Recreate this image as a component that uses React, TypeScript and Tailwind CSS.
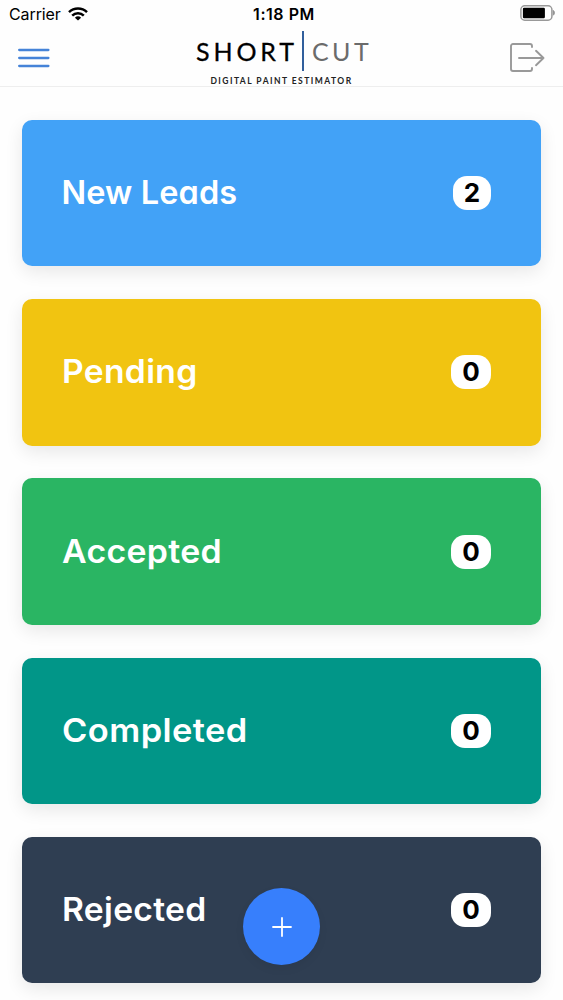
import React from "react";

type Lead = {
  label: string;
  count: number;
  color: string;
  stretch: string;
  badge: string;
};

const leads: Lead[] = [
  { label: "New Leads", count: 2, color: "bg-[#42a2f7]", stretch: "tracking-[0.1px]", badge: "w-[38px]" },
  { label: "Pending", count: 0, color: "bg-[#f1c411]", stretch: "tracking-[0.3px] scale-x-[1.035]", badge: "w-10" },
  { label: "Accepted", count: 0, color: "bg-[#2ab563]", stretch: "tracking-[0.3px] scale-x-[1.042]", badge: "w-10" },
  { label: "Completed", count: 0, color: "bg-[#019688]", stretch: "tracking-[0.4px] scale-x-[1.06]", badge: "w-10" },
  { label: "Rejected", count: 0, color: "bg-[#2f3e52]", stretch: "tracking-[0.3px] scale-x-[1.035]", badge: "w-10" },
];

function StatusBar() {
  return (
    <div className="grid h-7 grid-cols-3 items-center pl-[9px] pr-[8px] text-[16px] leading-7 text-black">
      <div className="flex items-center gap-[7px]">
        <span className="-mt-px tracking-[-0.1px]">Carrier</span>
        <svg className="-mt-px" width="20" height="14" viewBox="0 0 20 14" fill="none" stroke="#000" strokeWidth="2.5">
          <path d="M1 5.2a13 13 0 0 1 18 0" />
          <path d="M4.2 8.6a8.3 8.3 0 0 1 11.6 0" />
          <path d="M10 13.6 6.9 10.7a4.5 4.5 0 0 1 6.2 0Z" fill="#000" stroke="none" />
        </svg>
      </div>
      <span className="-mt-px pl-1 text-center font-semibold tracking-[0.55px]">1:18 PM</span>
      <svg className="-mt-0.5 justify-self-end" width="35" height="16" viewBox="0 0 35 16">
        <rect x="0.9" y="0.8" width="31" height="14.4" rx="3.8" fill="none" stroke="#999" strokeWidth="1.5" />
        <rect x="2.9" y="2.8" width="22" height="10.4" rx="1.2" fill="#000" />
        <path d="M33.2 5.3a3 3 0 0 1 0 5Z" fill="#888" stroke="#888" strokeWidth="0.6" />
      </svg>
    </div>
  );
}

function Logo() {
  return (
    <div className="flex flex-col items-center font-['Lato',sans-serif]">
      <div className="flex h-[42px] items-center text-[25px] leading-[42px]">
        <span className="w-[109px] pl-[3px] tracking-[3.9px] text-black [-webkit-text-stroke:0.3px_#000]">SHORT</span>
        <span className="h-10 w-0.5 bg-[#315f9c]" />
        <span className="w-[66px] pl-[8px] tracking-[3.4px] text-[#6b6b6b]">CUT</span>
      </div>
      <span className="pt-[3px] text-[8.5px] font-bold leading-3 tracking-[1.45px] text-[#222]">
        DIGITAL PAINT ESTIMATOR
      </span>
    </div>
  );
}

function Header() {
  return (
    <header className="flex h-[59px] items-start justify-between border-b border-[#eeeeee] pl-[18px] pr-[18px]">
      <button aria-label="Menu" className="mt-[20px] w-[35px]">
        <svg width="32" height="20" viewBox="0 0 32 20" stroke="#4583d8" strokeWidth="2.3" strokeLinecap="round">
          <path d="M1.2 2h29.2M1.2 10h29.2M1.2 18h29.2" />
        </svg>
      </button>
      <div className="mt-0.5">
        <Logo />
      </div>
      <button aria-label="Log out" className="mt-[14px]">
        <svg width="35" height="31" viewBox="0 0 35 31" fill="none" stroke="#999" strokeWidth="1.9" strokeLinecap="round" strokeLinejoin="round">
          <path d="M22 5V4a2 2 0 0 0-2-2H3a2 2 0 0 0-2 2v23a2 2 0 0 0 2 2h17a2 2 0 0 0 2-2v-1" />
          <path d="M9 16h24.5M26 8.8l7.5 7.2L26 23.2" />
        </svg>
      </button>
    </header>
  );
}

function LeadCard({ lead }: { lead: Lead }) {
  return (
    <div className={`flex h-[146.5px] shrink-0 items-center justify-between rounded-[10px] pl-[39.5px] pr-[50px] shadow-[0_6px_18px_rgba(0,0,0,0.09)] ${lead.color}`}>
      <span className={`origin-left text-[32.5px] font-semibold leading-10 text-white [font-feature-settings:'cv11'] ${lead.stretch}`}>
        {lead.label}
      </span>
      <span className={`flex h-[34px] items-center justify-center rounded-[14px] bg-white text-[26px] font-bold leading-none text-black ${lead.badge}`}>
        {lead.count}
      </span>
    </div>
  );
}

export default function App() {
  return (
    <div className="relative flex h-[1000px] w-full flex-col overflow-hidden bg-[#fefefe] font-['Inter',sans-serif]">
      <StatusBar />
      <Header />
      <main className="flex flex-col gap-[32.75px] px-[22px] pt-[32.75px]">
        {leads.map((lead) => (
          <LeadCard key={lead.label} lead={lead} />
        ))}
      </main>
      <button aria-label="Add lead" className="absolute left-[243px] top-[888px] flex size-[77px] items-center justify-center rounded-full bg-[#377ffc] shadow-[0_4px_10px_rgba(0,0,0,0.06)]">
        <svg width="20" height="20" viewBox="0 0 20 20" stroke="#fff" strokeWidth="1.8" strokeLinecap="round">
          <path d="M10 1v18M1 10h18" />
        </svg>
      </button>
    </div>
  );
}
